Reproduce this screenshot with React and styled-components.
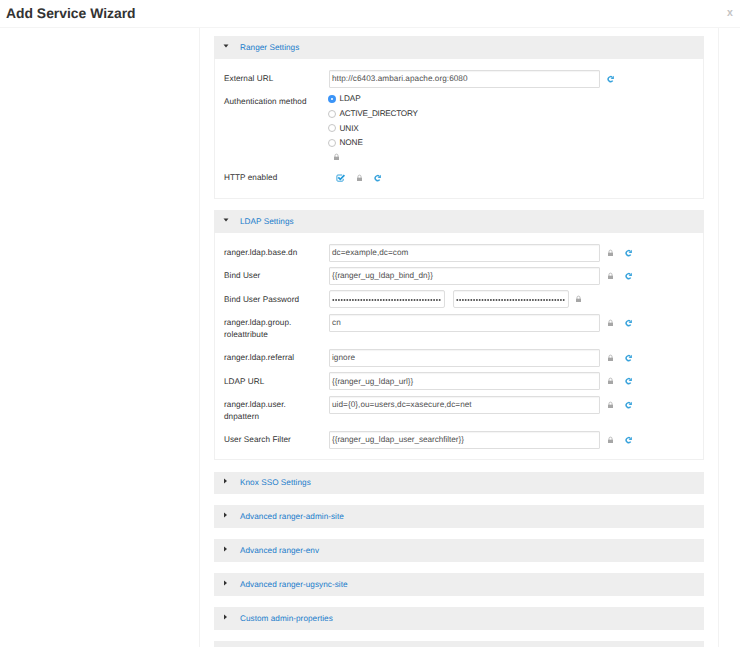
import React from "react";
import styled, { createGlobalStyle } from "styled-components";

const GlobalStyle = createGlobalStyle`
  * { box-sizing: border-box; }
  body {
    margin: 0;
    background: #fff;
    color: #333;
    font-family: "Liberation Sans", Arial, sans-serif;
    font-size: 8.2px;
    line-height: 11.7px;
    text-rendering: geometricPrecision;
    overflow: hidden;
  }
`;

const Page = styled.div`
  height: 647px;
  overflow: hidden;
  display: flex;
  flex-direction: column;
`;

const Header = styled.header`
  flex: none;
  height: 28px;
  padding: 0 6px 1px;
  border-bottom: 1px solid #f4f4f4;
  display: flex;
  justify-content: space-between;
  align-items: center;
`;

const Title = styled.h1`
  margin: 0;
  font-size: 13.9px;
  line-height: 19px;
  font-weight: 700;
  color: #333;
`;

const Close = styled.button`
  border: 0;
  padding: 0 0 2px;
  width: 8px;
  background: none;
  color: #c4c4c4;
  font: 700 10.5px/12px "Liberation Sans", Arial, sans-serif;
`;

const Content = styled.main`
  flex: none;
  width: 520px;
  height: 640px;
  margin-left: 199px;
  padding: 8px 14px 0;
  border: solid #f2f2f2;
  border-width: 0 1px;
`;

const Panel = styled.section`
  height: ${(p) => p.$height}px;
  margin-bottom: ${(p) => p.$gap}px;
  border: 1px solid #f0f0f0;
`;

const PanelHeading = styled.div`
  height: 22.5px;
  margin: -1px -1px 0;
  padding: 0.8px 0 0 9px;
  background: #eee;
  display: flex;
  align-items: center;
  color: #1a7ccb;
`;

const Caret = styled.svg`
  width: 6px;
  height: 6px;
  margin: 0 11px 4px 0;
  fill: #333;
  flex: none;
`;

const HeadingText = styled.span`
  letter-spacing: 0.04px;
`;

const Fields = styled.div`
  padding: 11px 9px 0;
`;

const Row = styled.div`
  display: flex;
  align-items: flex-start;
  height: ${(p) => p.$height || 23.4}px;
`;

const Label = styled.div`
  flex: none;
  width: 105px;
  padding-top: 3.4px;
  white-space: pre-line;
  letter-spacing: 0.05px;
`;

const Input = styled.div`
  flex: none;
  width: ${(p) => (p.$half ? 116 : 271)}px;
  height: 18px;
  margin-right: ${(p) => (p.$half ? 8 : 7)}px;
  padding: 2.6px 2px 0;
  border: 1px solid #dedede;
  border-radius: ${(p) => (p.$half ? 2 : 1)}px;
  box-shadow: inset 0 1px 1px #f4f4f4;
  color: #505050;
  letter-spacing: ${(p) => (p.$tight ? -0.04 : 0.05)}px;
  white-space: nowrap;
  overflow: hidden;
`;

const Dots = styled.svg`
  display: block;
  width: 110px;
  height: 2px;
  margin-top: 5px;
  fill: #484848;
`;

const Icons = styled.div`
  display: flex;
  align-items: center;
  height: 18px;
  gap: 11px;
`;

const PasswordIcons = styled(Icons)`
  margin-left: -2px;
`;

const Glyph = styled.svg`
  display: block;
  flex: none;
  width: ${(p) => p.$width || 7}px;
  height: 8px;
`;

const Radios = styled.div`
  display: flex;
  flex-direction: column;
  margin: -1px 0 0 -1px;
`;

const RadioRow = styled.div`
  display: flex;
  align-items: center;
  height: 14.6px;
  gap: 3.5px;
  letter-spacing: ${(p) => p.$spacing}px;
`;

const Radio = styled.span`
  width: 8px;
  height: 8px;
  border-radius: 50%;
  border: ${(p) => (p.$on ? "3px solid #3b94f7" : "1px solid #c6c6c6")};
  background: #fff;
`;

const RadioLock = styled.div`
  padding: 3px 0 0 5px;
`;

const HttpIcons = styled(Icons)`
  padding-left: 7px;
`;

function Lock() {
  return (
    <Glyph viewBox="0 0 7 8">
      <path d="M2 4V2.6a1.5 1.5 0 0 1 3 0V4" fill="none" stroke="#b4b4b4" strokeWidth=".9" />
      <path d="M1 3.7h5V7H1z" fill="#a6a6a6" />
    </Glyph>
  );
}

function Refresh() {
  return (
    <Glyph viewBox="0 0 7 8">
      <path d="M5.7 5.6A2.5 2.5 0 1 1 5.2 2.1" fill="none" stroke="#39a3dc" strokeWidth="1.5" />
      <path d="M6.9.8v3.3H3.6z" fill="#39a3dc" />
    </Glyph>
  );
}

function Check() {
  return (
    <Glyph viewBox="0 0 9 8" $width={9}>
      <path d="M7.2 4.8v1.4q0 1-1 1H1.9q-1 0-1-1V2q0-1 1-1h4.3" fill="none" stroke="#39a3dc" strokeWidth="1" />
      <path d="M2.3 3.4 4.3 5.3 8.4 1.2" fill="none" stroke="#229bdb" strokeWidth="1.7" />
    </Glyph>
  );
}

function Password() {
  return (
    <Input $half>
      <Dots viewBox="0 0 110 2">
        {Array.from({ length: 39 }, (_, i) => (
          <circle key={i} cx={1.3 + i * 2.8} cy="1" r=".95" />
        ))}
      </Dots>
    </Input>
  );
}

function Heading({ open, children }) {
  return (
    <PanelHeading>
      <Caret viewBox="0 0 6 6">
        <path d={open ? "M.5 1.5h5L3 4.5z" : "M1 .5v5L4 3z"} />
      </Caret>
      <HeadingText>{children}</HeadingText>
    </PanelHeading>
  );
}

function Field({ label, value, height, lock = true }) {
  return (
    <Row $height={height}>
      <Label>{label}</Label>
      <Input $tight={value.startsWith("{{")}>{value}</Input>
      <Icons>
        {lock && <Lock />}
        <Refresh />
      </Icons>
    </Row>
  );
}

const collapsed = [
  "Knox SSO Settings",
  "Advanced ranger-admin-site",
  "Advanced ranger-env",
  "Advanced ranger-ugsync-site",
  "Custom admin-properties",
  "",
];

export default function App() {
  return (
    <Page>
      <GlobalStyle />
      <Header>
        <Title>Add Service Wizard</Title>
        <Close>x</Close>
      </Header>
      <Content>
        <Panel $height={163} $gap={11}>
          <Heading open>Ranger Settings</Heading>
          <Fields>
            <Field label="External URL" value="http://c6403.ambari.apache.org:6080" lock={false} />
            <Row $height={76}>
              <Label>Authentication method</Label>
              <Radios>
                {["LDAP", "ACTIVE_DIRECTORY", "UNIX", "NONE"].map((name, i) => (
                  <RadioRow key={name} $spacing={i === 1 ? -0.24 : -0.1}>
                    <Radio $on={i === 0} />
                    {name}
                  </RadioRow>
                ))}
                <RadioLock>
                  <Lock />
                </RadioLock>
              </Radios>
            </Row>
            <Row>
              <Label>HTTP enabled</Label>
              <HttpIcons>
                <Check />
                <Lock />
                <Refresh />
              </HttpIcons>
            </Row>
          </Fields>
        </Panel>
        <Panel $height={250} $gap={11.5}>
          <Heading open>LDAP Settings</Heading>
          <Fields>
            <Field label="ranger.ldap.base.dn" value="dc=example,dc=com" />
            <Field label="Bind User" value="{{ranger_ug_ldap_bind_dn}}" />
            <Row>
              <Label>Bind User Password</Label>
              <Password />
              <Password />
              <PasswordIcons>
                <Lock />
              </PasswordIcons>
            </Row>
            <Field label={"ranger.ldap.group.\nroleattribute"} value="cn" height={35.1} />
            <Field label="ranger.ldap.referral" value="ignore" />
            <Field label="LDAP URL" value="{{ranger_ug_ldap_url}}" />
            <Field
              label={"ranger.ldap.user.\ndnpattern"}
              value="uid={0},ou=users,dc=xasecure,dc=net"
              height={35.1}
            />
            <Field label="User Search Filter" value="{{ranger_ug_ldap_user_searchfilter}}" />
          </Fields>
        </Panel>
        {collapsed.map((name) => (
          <Panel key={name} $height={22.4} $gap={11.55}>
            <Heading>{name}</Heading>
          </Panel>
        ))}
      </Content>
    </Page>
  );
}
